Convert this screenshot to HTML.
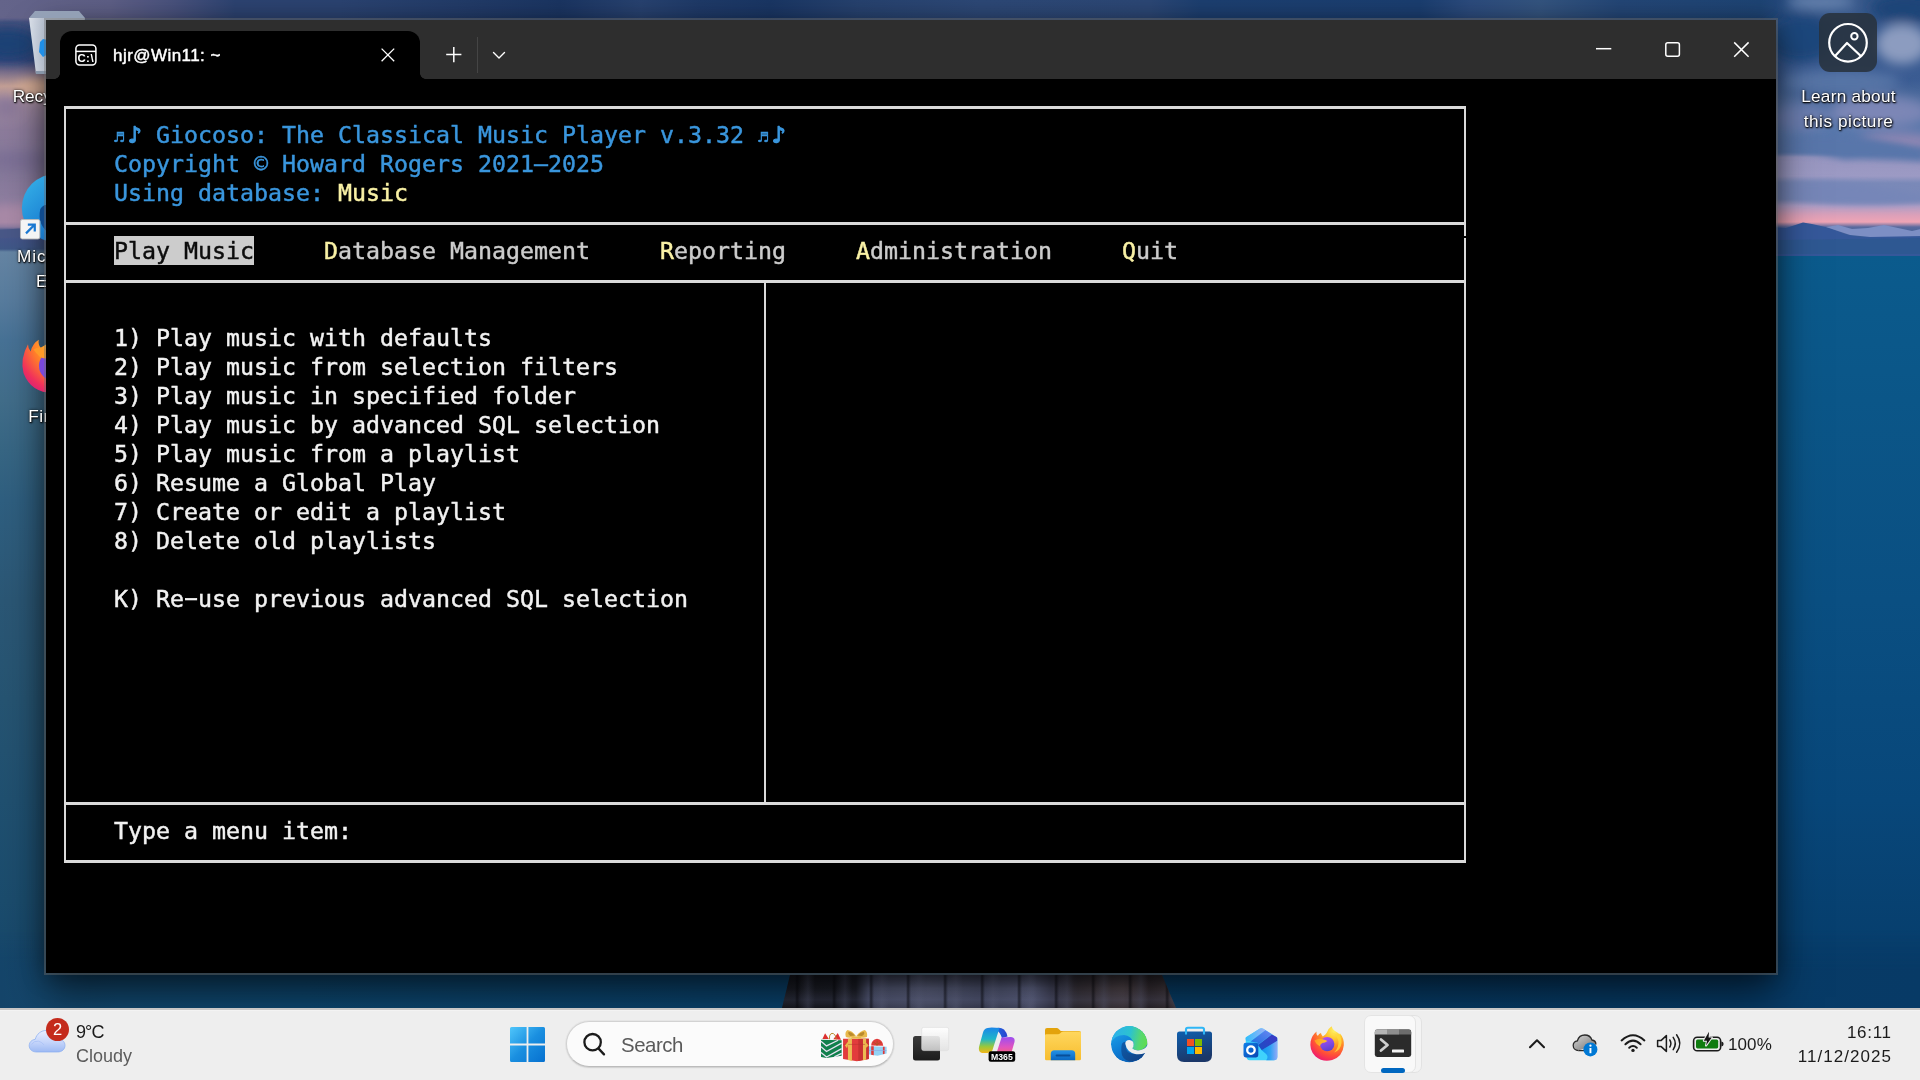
<!DOCTYPE html>
<html lang="en">
<head>
<meta charset="utf-8">
<title>hjr@Win11: ~</title>
<style>
*{box-sizing:border-box;margin:0;padding:0}
html,body{width:1920px;height:1080px;overflow:hidden;background:#0c3f63}
body{position:relative;font-family:"Liberation Sans","DejaVu Sans",sans-serif;color:#fff}
.abs{position:absolute}
svg{position:absolute;overflow:visible}
/* ---------- wallpaper ---------- */
#wp{position:absolute;left:0;top:0;width:1920px;height:1008px;overflow:hidden;background:#0d4a76}
#wpR{left:60px;top:0;width:1860px;height:1008px;background:linear-gradient(180deg,#27487e 0px,#34568c 30px,#3b5c93 80px,#4f6d9e 100px,#5777ab 130px,#5a78ac 152px,#9896c0 157px,#9c9ac4 176px,#7a89b8 183px,#7988b8 199px,#b09ec5 206px,#dba0b9 215px,#efa4b5 222px,#5a6a9e 227px,#3a5c94 236px,#2b598e 253px,#0b5b8d 255px,#0b5688 400px,#0a4f82 600px,#08477a 800px,#073f6e 940px,#073a66 1008px)}
#wpL{left:0;top:0;width:60px;height:1008px;background:linear-gradient(180deg,#636389 0px,#4a5480 18px,#2e4272 40px,#33457a 60px,#7a6f8c 72px,#c4a096 86px,#a08aa0 102px,#8d7c9c 130px,#85789a 170px,#8e7ea0 200px,#a98aa8 222px,#8a7aa0 227px,#4c5a8c 230px,#44568a 240px,#3f5888 249px,#6585a4 252px,#6283a2 264px,#587c9e 300px,#477296 340px,#416d8a 400px,#376684 450px,#2f5f80 500px,#2b5775 600px,#265472 700px,#205070 800px,#1b4c6d 900px,#15456a 1008px)}
#wpT{left:0;top:0;width:1920px;height:22px;background:linear-gradient(90deg,#64648a 0px,#5e5f86 110px,#48517c 175px,#2d4371 235px,#2b4371 340px,#223b68 470px,#1b3562 560px,#284270 640px,#1f3a68 700px,#1a3664 770px,#27426f 860px,#2d4876 980px,#2c4775 1150px,#1d3f70 1200px,#1b3e70 1420px,#2c4b7d 1470px,#34547f 1540px,#244676 1620px,#1e4474 1760px,#2a4c80 1800px,#3a5a8c 1850px,#22467a 1920px);-webkit-mask-image:linear-gradient(180deg,#000 0,#000 18px,transparent 22px);mask-image:linear-gradient(180deg,#000 0,#000 18px,transparent 22px)}
#wpB{left:0;top:930px;width:1920px;height:78px;background:linear-gradient(90deg,#15456a 0px,#124a72 120px,#0e4a74 300px,#0b4570 700px,#083f6a 1200px,#073c68 1600px,#073a66 1920px);-webkit-mask-image:linear-gradient(180deg,transparent 0,#000 40px);mask-image:linear-gradient(180deg,transparent 0,#000 40px)}
#pier{left:778px;top:975px;width:400px;height:33px;clip-path:polygon(12px 0,384px 0,398px 33px,4px 33px);background:repeating-linear-gradient(90deg,rgba(0,0,0,0) 0,rgba(0,0,0,0) 17px,rgba(8,8,14,.55) 19px,rgba(0,0,0,0) 22px,rgba(120,125,160,.25) 30px,rgba(0,0,0,0) 37px),linear-gradient(180deg,rgba(10,10,16,.35) 0,rgba(0,0,0,0) 40%,rgba(90,95,130,.25) 75%,rgba(10,10,16,.3) 100%),linear-gradient(90deg,#1c1e26 0,#20222c 78px,#565c7a 90px,#666c8c 150px,#545a78 200px,#6a7094 255px,#4c4e68 272px,#403a42 300px,#584c52 345px,#3a3238 372px,#4e444a 400px)}
/* ---------- terminal window ---------- */
#win{position:absolute;left:44px;top:18px;width:1734px;height:957px;border:2px solid rgba(111,111,111,.435);background:#000;background-clip:padding-box;will-change:transform}
#wsh{position:absolute;left:46px;top:20px;width:1730px;height:953px;box-shadow:0 24px 40px rgba(0,0,0,.52),0 2px 22px rgba(0,0,0,.4)}
#win .titlebar{position:absolute;left:0;top:0;width:1730px;height:59px;background:#2e2e2e}
#win .tab{position:absolute;left:14px;top:11px;width:360px;height:48px;background:#000;border-radius:12px 12px 0 0}
#win .tabcurve{position:absolute;left:374px;top:53px;width:6px;height:6px;background:radial-gradient(circle at 6px 0,#2e2e2e 5.6px,#000 6.2px)}
#win .tabcurveL{position:absolute;left:8px;top:53px;width:6px;height:6px;background:radial-gradient(circle at 0 0,#2e2e2e 5.6px,#000 6.2px)}
#win .tabtitle{position:absolute;left:67px;top:24px;font-size:17px;line-height:24px;color:#fff;font-weight:400;-webkit-text-stroke:0.45px #fff;white-space:nowrap;letter-spacing:0.45px}
#term{position:absolute;left:0;top:0;width:1920px;height:1080px;will-change:transform}
.ln{position:absolute;background:#dadada}
pre.t{position:absolute;font-family:"DejaVu Sans Mono","Liberation Mono",monospace;font-size:23.25px;line-height:29px;height:29px;white-space:pre;color:#f2f2f2;-webkit-text-stroke:.45px}
pre.cy{color:#3a96dd}
pre.gr{color:#cccccc}
.ye{color:#f9f1a5}
.hy{display:inline-block;width:14px;transform:translateY(-2px) scaleX(1.9);text-align:center}
.n1{display:inline-block;width:14px;font-size:16.5px;line-height:20px;text-align:left;letter-spacing:-2px;-webkit-text-stroke:.5px}
.n2{display:inline-block;width:14px;-webkit-text-stroke:1.3px}
.hl{background:#cccccc;color:#0c0c0c;display:inline-block;height:29px;vertical-align:top}
/* ---------- taskbar ---------- */
#tb{position:absolute;left:0;top:1008px;width:1920px;height:72px;background:#eeeeee;border-top:2px solid #c9c7c6;box-shadow:inset 0 1px 0 #f3f3f3}
#tbi{position:absolute;left:0;top:0;width:1920px;height:1080px;color:#1b1b1b;will-change:transform}
.tx{white-space:nowrap;line-height:24px}
.badge{left:45.900px;top:1017.800px;width:23.200px;height:23.200px;border-radius:12px;background:#c42b1c;color:#fff;font-size:16.500px;line-height:23.200px;text-align:center}
.search{left:566px;top:1021px;width:328px;height:46px;border-radius:23px;background:#fbfbfb;border:1px solid #d2d2d2;border-bottom-color:#bcbcbc;box-shadow:0 0 0 1px rgba(0,0,0,.035),0 1px 1.500px rgba(0,0,0,.1)}
#desk{position:absolute;left:0;top:0;width:1920px;height:1008px;overflow:hidden;will-change:transform}
.dl{position:absolute;left:-13px;width:140px;text-align:center;font-size:17.2px;line-height:25px;color:#fff;white-space:nowrap;text-shadow:1px 1px 2px rgba(0,0,0,.95),0 0 3px rgba(0,0,0,.8),0 1px 1px rgba(0,0,0,.7)}
</style>
</head>
<body>
<div id="wp">
  <div class="abs" id="wpR"></div>
  <div class="abs" id="wpL"></div>
  <div class="abs" id="wpT"></div>
  <div class="abs" id="wpB"></div>
  <svg style="left:1760px;top:0" width="160" height="270" viewBox="1760 0 160 270">
    <defs><filter id="b6" x="-30%" y="-30%" width="160%" height="160%"><feGaussianBlur stdDeviation="6"/></filter>
    <filter id="b3" x="-30%" y="-30%" width="160%" height="160%"><feGaussianBlur stdDeviation="3"/></filter>
    <filter id="b1" x="-10%" y="-10%" width="120%" height="120%"><feGaussianBlur stdDeviation=".7"/></filter></defs>
    <g filter="url(#b6)">
      <ellipse cx="1800" cy="38" rx="34" ry="24" fill="#1f477c"/>
      <ellipse cx="1905" cy="8" rx="34" ry="14" fill="#1e4478"/>
      <ellipse cx="1820" cy="2" rx="34" ry="8" fill="#6480ac"/>
      <ellipse cx="1902" cy="44" rx="26" ry="20" fill="#8c9cc0"/>
      <ellipse cx="1840" cy="82" rx="60" ry="12" fill="#5674a6"/>
      <ellipse cx="1880" cy="112" rx="50" ry="16" fill="#7c86b6"/>
      <ellipse cx="1800" cy="118" rx="30" ry="14" fill="#6c7eb0"/>
      <ellipse cx="1900" cy="142" rx="40" ry="8" fill="#9488b4"/>
    </g>
    <g filter="url(#b3)">
      <path d="M1770 140Q1850 128 1925 150L1925 162Q1860 158 1845 160Q1800 150 1770 154z" fill="#5876aa"/>
      <path d="M1770 184Q1840 176 1925 196L1925 202Q1850 208 1800 200L1770 196z" fill="#7686b8"/>
    </g>
    <g filter="url(#b1)">
      <path d="M1770 227L1786 228L1803 222.500L1812 224L1830 228L1845 234L1860 237L1880 234L1905 233L1925 229L1925 256L1770 256z" fill="#36599a"/>
      <path d="M1826 227L1838 225L1852 229L1868 228L1884 225L1898 228L1912 231L1925 228L1925 236L1870 237L1850 235z" fill="#7d8fc4"/>
      <path d="M1770 240L1925 238L1925 254L1770 254z" fill="#2d5890" opacity=".8"/>
    </g>
  </svg>
  <svg style="left:0;top:0" width="70" height="300" viewBox="0 0 70 300">
    <g filter="url(#b6)">
      <ellipse cx="8" cy="44" rx="30" ry="15" fill="#1d4276"/>
      <ellipse cx="36" cy="88" rx="20" ry="8" fill="#e2b69c"/>
      <ellipse cx="6" cy="108" rx="14" ry="10" fill="#8a789a"/>
      <ellipse cx="20" cy="160" rx="40" ry="8" fill="#7b7096"/>
      <ellipse cx="20" cy="214" rx="40" ry="7" fill="#ac8ba8"/>
    </g>
    <g filter="url(#b1)"><path d="M0 230L20 228.500L46 227L70 228L70 236L0 238z" fill="#4a5888"/></g>
  </svg>
  <div class="abs" id="pier"></div>
</div>
<div id="wsh"></div>
<div id="desk">
  <!-- recycle bin -->
  <svg style="left:28px;top:10px" width="58" height="70" viewBox="0 0 58 70">
    <defs><linearGradient id="rb1" x1="0" y1="0" x2="1" y2="0"><stop offset="0" stop-color="#e9eef4"/><stop offset=".25" stop-color="#c3ccd8"/><stop offset="1" stop-color="#aab6c6"/></linearGradient></defs>
    <path d="M1 8L7 1H51L57 8z" fill="#9aa9bc" opacity=".9"/>
    <path d="M1 8H57L50 64H8z" fill="url(#rb1)" opacity=".9"/><path d="M7.600 61H50.400L50 64H8z" fill="#8796a8"/>
    <path d="M12 32L15 29L20 30L18 36L20 44L15 47L11 42z" fill="#1f8fe8"/>
  </svg>
  <div class="dl" style="top:83.500px;left:-12px">Recycle Bin</div>
  <!-- edge shortcut -->
  <svg style="left:20px;top:172px" width="72" height="72" viewBox="0 0 78 78">
    <defs><linearGradient id="de1" x1="0" y1="0" x2="1" y2="1"><stop offset="0" stop-color="#39b6ea"/><stop offset=".5" stop-color="#1c84d4"/><stop offset="1" stop-color="#114a94"/></linearGradient></defs>
    <circle cx="39" cy="39" r="37" fill="url(#de1)"/>
    <path d="M22 40Q18 58 34 68Q50 76 66 64Q50 70 40 60Q30 50 34 38Q28 32 22 40z" fill="#0f4a8e"/>
    <rect x=".5" y="51.500" width="21" height="21" rx="2" fill="#f4f4f4" stroke="#b8b8b8" stroke-width="1"/>
    <path d="M6.500 66.500L15.500 57.500M8.500 57H16V64.500" fill="none" stroke="#1a78d2" stroke-width="2.400"/>
  </svg>
  <div class="dl" style="top:244px;left:-14px"><span style="letter-spacing:.9px">Microsoft</span><br>Edge</div>
  <!-- firefox -->
  <svg style="left:19px;top:327.800px" width="68.400" height="68.400" viewBox="0 0 38 38">
    <defs><radialGradient id="df1" cx=".75" cy=".15" r="1"><stop offset="0" stop-color="#fff04a"/><stop offset=".3" stop-color="#ffbd2f"/><stop offset=".6" stop-color="#ff7a2a"/><stop offset=".85" stop-color="#f0305c"/><stop offset="1" stop-color="#d61f7a"/></radialGradient></defs>
    <path d="M21 1Q23.500 5 27.500 7Q26.500 4.500 27.500 3Q36.500 10 36 21Q35 34 21 36Q7 37 2.500 25Q.5 17 5 9Q5 11.500 6.500 13Q7.500 8.500 11 6.500Q10.500 9 12 11Q17 9 21 1z" fill="url(#df1)"/>
    <circle cx="19.500" cy="21" r="8.400" fill="#7a48dc"/>
    <path d="M8 12Q12 9.500 16 12.500Q19 11 22 12.500Q18 13.500 17 16.500Q14 17.500 11.500 16Q9.500 14 8 12z" fill="#ff9a28"/>
  </svg>
  <div class="dl" style="top:404px;left:-14px;letter-spacing:.4px">Firefox</div>
  <!-- learn about this picture -->
  <div class="abs" style="left:1819px;top:13px;width:58px;height:59px;border-radius:11px;background:rgba(40,50,62,.88)"></div>
  <svg style="left:1826px;top:21px" width="44" height="44" viewBox="0 0 44 44" fill="none" stroke="#fff" stroke-width="2.200" stroke-linejoin="round">
    <circle cx="22" cy="21.800" r="18.800"/><circle cx="28.400" cy="15.300" r="3.200" stroke-width="2"/><path d="M8.400 35.800L21 22L35.600 35.800" stroke-linecap="butt"/>
  </svg>
  <div class="dl" style="left:1778px;width:141px;top:83.600px;line-height:25px;letter-spacing:.25px">Learn about<br><span style="letter-spacing:.55px">this picture</span></div>
</div>
<div id="win">
  <div class="titlebar">
    <div class="tab"></div>
    <div class="tabcurve"></div><div class="tabcurveL"></div>
    <svg style="left:29px;top:24px" width="22" height="22" viewBox="0 0 22 22" fill="none" stroke="#fff" stroke-width="1.5">
      <rect x="0.9" y="0.9" width="20" height="20" rx="3.6"/>
      <path d="M1 7.4H21"/>
      <text x="2.4" y="18" font-family="Liberation Sans, sans-serif" font-weight="700" font-size="11.4" fill="#fff" stroke="none" letter-spacing="0.5">C:\</text>
    </svg>
    <div class="tabtitle">hjr@Win11: ~</div>
    <svg style="left:335.200px;top:27.600px" width="14" height="14" viewBox="0 0 14 14" stroke="#fff" stroke-width="1.3" fill="none"><path d="M0.6 0.6L13.2 13.2M13.2 0.6L0.6 13.2"/></svg>
    <svg style="left:400px;top:27px" width="16" height="16" viewBox="0 0 16 16" stroke="#fff" stroke-width="1.5" fill="none"><path d="M0.2 7.6H15.4M7.8 0H7.8V15.2"/></svg>
    <div class="abs" style="left:431px;top:17px;width:1px;height:36px;background:#454545"></div>
    <svg style="left:446px;top:31px" width="14" height="8" viewBox="0 0 14 8" stroke="#fff" stroke-width="1.4" fill="none" stroke-linecap="round" stroke-linejoin="round"><path d="M1.500 1.500L7 7L12.500 1.500"/></svg>
    <svg style="left:1549px;top:21px" width="16" height="16" viewBox="0 0 16 16" stroke="#fff" stroke-width="1.5" fill="none"><path d="M1 7.7H16.3"/></svg>
    <svg style="left:1618px;top:21px" width="16" height="16" viewBox="0 0 16 16" stroke="#fff" stroke-width="1.5" fill="none"><rect x="1.8" y="1.7" width="13.6" height="13.6" rx="2"/></svg>
    <svg style="left:1687px;top:21px" width="16" height="16" viewBox="0 0 16 16" stroke="#fff" stroke-width="1.5" fill="none"><path d="M1.2 1.4L15.6 15.8M15.6 1.4L1.2 15.8"/></svg>
  </div>
</div>
<div id="term">
<div class="ln" style="left:64px;top:106px;width:1402px;height:3px"></div>
<div class="ln" style="left:64px;top:222px;width:1402px;height:3px"></div>
<div class="ln" style="left:64px;top:280px;width:1402px;height:3px"></div>
<div class="ln" style="left:64px;top:802px;width:1402px;height:3px"></div>
<div class="ln" style="left:64px;top:860px;width:1402px;height:3px"></div>
<div class="ln" style="left:64px;top:106px;width:2px;height:757px"></div>
<div class="ln" style="left:1464px;top:106px;width:2px;height:130px"></div>
<div class="ln" style="left:1464px;top:238px;width:2px;height:625px"></div>
<div class="ln" style="left:764px;top:280px;width:2px;height:525px"></div>
<pre class="t cy" style="left:114px;top:120px"><span class="n1">♬</span><span class="n2">♪</span> Giocoso: The Classical Music Player v.3.32 <span class="n1">♬</span><span class="n2">♪</span></pre>
<pre class="t cy" style="left:114px;top:149px">Copyright © Howard Rogers 2021–2025</pre>
<pre class="t cy" style="left:114px;top:178px">Using database: <span class="ye">Music</span></pre>
<pre class="t gr" style="left:114px;top:236px"><span class="hl">Play Music</span></pre>
<pre class="t gr" style="left:324px;top:236px"><span class="ye">D</span>atabase Management</pre>
<pre class="t gr" style="left:660px;top:236px"><span class="ye">R</span>eporting</pre>
<pre class="t gr" style="left:856px;top:236px"><span class="ye">A</span>dministration</pre>
<pre class="t gr" style="left:1122px;top:236px"><span class="ye">Q</span>uit</pre>
<pre class="t" style="left:114px;top:323px">1) Play music with defaults</pre>
<pre class="t" style="left:114px;top:352px">2) Play music from selection filters</pre>
<pre class="t" style="left:114px;top:381px">3) Play music in specified folder</pre>
<pre class="t" style="left:114px;top:410px">4) Play music by advanced SQL selection</pre>
<pre class="t" style="left:114px;top:439px">5) Play music from a playlist</pre>
<pre class="t" style="left:114px;top:468px">6) Resume a Global Play</pre>
<pre class="t" style="left:114px;top:497px">7) Create or edit a playlist</pre>
<pre class="t" style="left:114px;top:526px">8) Delete old playlists</pre>
<pre class="t" style="left:114px;top:584px">K) Re<span class="hy">-</span>use previous advanced SQL selection</pre>
<pre class="t" style="left:114px;top:816px">Type a menu item:</pre>
</div>
<div id="tb"></div>
<div id="tbi">
  <!-- weather widget -->
  <svg style="left:28px;top:1026px" width="40" height="28" viewBox="0 0 40 28">
    <defs><linearGradient id="cl" x1="0" y1="0" x2="0" y2="1"><stop offset="0" stop-color="#eaf0ff"/><stop offset=".55" stop-color="#c4d4fa"/><stop offset="1" stop-color="#9db9f3"/></linearGradient></defs>
    <path d="M8.5 26C4 26 1.2 23.2 1.2 19.6c0-3.4 2.6-6 6-6.2C8.6 8 13 4.4 18.6 4.4c5.4 0 9.6 3.2 11 8 4.2.4 7.4 3.4 7.4 7 0 3.8-3 6.6-7.4 6.6z" fill="url(#cl)" stroke="#86acf0" stroke-width=".7"/>
    <path d="M3.500 18.500Q6 14.500 10.500 15.200Q14 16 16 19" fill="none" stroke="#a9c2f6" stroke-width=".8"/>
  </svg>
  <div class="abs badge">2</div>
  <div class="abs tx" style="left:76px;top:1020px;font-size:18px;letter-spacing:-.9px;color:#1a1a1a">9°C</div>
  <div class="abs tx" style="left:76px;top:1044px;font-size:18px;color:#5c5c5c">Cloudy</div>
  <!-- start -->
  <svg style="left:510px;top:1027px" width="35" height="35" viewBox="0 0 35 35">
    <defs><linearGradient id="wl" x1="0" y1="0" x2="1" y2="1"><stop offset="0" stop-color="#4fc6fb"/><stop offset=".5" stop-color="#1a8fe0"/><stop offset="1" stop-color="#0670cf"/></linearGradient></defs>
    <path d="M1.5 0H16.6V16.6H0V1.5Q0 0 1.5 0zM18.4 0H33.5Q35 0 35 1.5V16.6H18.4zM0 18.4H16.6V35H1.5Q0 35 0 33.5zM18.4 18.4H35V33.5Q35 35 33.5 35H18.4z" fill="url(#wl)"/>
  </svg>
  <!-- search -->
  <div class="abs search"></div>
  <svg style="left:582px;top:1031px" width="24" height="26" viewBox="0 0 24 26" fill="none" stroke="#1b1b1b" stroke-width="2.3" stroke-linecap="round"><circle cx="10.6" cy="11.2" r="8.2"/><path d="M16.6 17.6L22 23.4"/></svg>
  <div class="abs tx" style="left:621px;top:1032.500px;font-size:20.400px;letter-spacing:-.45px;color:#5a5a5a;line-height:24px">Search</div>
  <!-- gifts -->
  <svg style="left:820px;top:1030px" width="70" height="34" viewBox="0 0 70 34">
    <path d="M 2.42 8.98 L 5.09 3.27 L 8.84 8.98 z M 13.34 9.31 L 17.75 3.03 L 21.03 9.78 z" fill="#dc3030"/>
    <path d="M 9.59 9.22 Q 8.98 4.06 12.03 3.36 Q 15.55 3.36 16.25 9.45" fill="none" stroke="#b98a2c" stroke-width="1"/>
    <path d="M 1.02 9.69 L 21.64 10.25 L 21.64 25.63 L 6.50 28.06 L 1.02 27.03 z" fill="#10804c"/>
    <path d="M 1.02 11.19 L 6.50 15.88 L 18.13 10.25 M 1.02 16.81 L 6.50 21.50 L 21.64 13.06 M 1.02 22.44 L 6.50 27.03 L 21.64 18.69 M 14.38 26.80 L 21.64 23.38" fill="none" stroke="#e6e2f2" stroke-width="1.300"/>
    <path d="M 23.05 8.75 L 48.83 8.75 L 48.83 29.00 L 36.88 31.34 L 23.05 29.00 z" fill="#e23c3c"/>
    <path d="M 38.28 8.75 L 48.83 8.75 L 48.83 29.00 L 38.28 31.06 z" fill="#c93232"/>
    <path d="M 27.97 8.75 L 31.95 8.75 L 31.95 30.69 L 27.97 29.94 z M 42.97 8.75 L 46.11 8.75 L 46.11 29.66 L 42.97 30.22 z" fill="#ecbc52"/>
    <path d="M 23.05 14.38 L 48.83 14.38" stroke="#b63030" stroke-width=".5"/>
    <path d="M 36.17 6.17 Q 32.19 0.78 27.50 0.08 Q 24.45 2.19 25.86 6.88 Q 29.84 8.75 36.17 6.17 z M 36.17 6.17 Q 40.16 0.78 44.84 -0.06 Q 47.89 2.19 46.95 6.88 Q 42.50 8.75 36.17 6.17 z" fill="#e9b94c"/>
    <path d="M 35.00 5.47 Q 31.72 1.95 28.53 1.72 Q 27.50 4.06 30.31 5.94 z M 37.44 5.47 Q 40.63 1.95 43.91 1.72 Q 45.31 4.06 42.03 5.94 z" fill="#b98a2c"/>
    <path d="M 32.19 6.41 L 40.63 6.41 L 48.59 15.55 L 46.25 17.66 L 42.97 8.75 L 29.84 8.75 L 27.03 18.13 L 24.92 15.55 z" fill="#e9b94c"/>
    <path d="M 49.06 16.25 L 66.64 16.72 L 66.64 23.38 L 57.50 25.72 L 49.06 24.59 z" fill="#93d2f5"/>
    <path d="M 51.17 16.25 L 53.75 16.25 L 53.75 25.16 L 51.17 24.78 z M 62.89 16.63 L 64.63 16.63 L 64.63 23.84 L 62.89 24.31 z" fill="#e03a3a"/>
    <path d="M 49.06 20.47 L 66.64 20.47" stroke="#8aa6e0" stroke-width=".6"/>
    <path d="M 51.17 15.55 Q 51.41 9.69 57.03 8.75 Q 62.66 9.69 63.22 15.69 z" fill="#e03a3a"/>
    <path d="M 57.03 15.31 Q 54.69 12.03 53.28 12.50 M 57.03 15.31 Q 59.38 12.03 61.25 12.50 M 57.03 15.31 L 57.13 10.63" fill="none" stroke="#a8541e" stroke-width=".8"/>
  </svg>
  <!-- task view -->
  <svg style="left:912px;top:1026px" width="38" height="36" viewBox="0 0 38 36">
    <defs><linearGradient id="tv1" x1="0" y1="0" x2="0" y2="1"><stop offset="0" stop-color="#3a3a3a"/><stop offset="1" stop-color="#1c1c1c"/></linearGradient>
    <linearGradient id="tv2" x1="0" y1="0" x2="0" y2="1"><stop offset="0" stop-color="#ffffff" stop-opacity=".95"/><stop offset="1" stop-color="#e2e2e2" stop-opacity=".82"/></linearGradient></defs>
    <rect x="1" y="10" width="27" height="24.600" rx="2.500" fill="url(#tv1)"/>
    <rect x="9.700" y="1.400" width="27" height="23.200" rx="2" fill="url(#tv2)" stroke="#dcdcdc" stroke-width=".6"/>
  </svg>
  <!-- M365 copilot -->
  <svg style="left:978px;top:1027px" width="38" height="36" viewBox="0 0 38 36">
    <defs><linearGradient id="cp1" x1="0" y1="0" x2="0" y2="1"><stop offset="0" stop-color="#1a86e8"/><stop offset=".45" stop-color="#1fb6c9"/><stop offset=".75" stop-color="#9bc83a"/><stop offset="1" stop-color="#f2b418"/></linearGradient>
    <linearGradient id="cp2" x1="0" y1="0" x2="0" y2="1"><stop offset="0" stop-color="#9b4df0"/><stop offset=".5" stop-color="#e054c0"/><stop offset="1" stop-color="#ff6a5c"/></linearGradient>
    <linearGradient id="cp3" x1="0" y1="0" x2="1" y2="0"><stop offset="0" stop-color="#1d6fe0"/><stop offset="1" stop-color="#2a3fcf"/></linearGradient></defs>
    <path d="M17 1.500Q22 -.5 26 2.500Q28.500 5 29.500 9.500L24 11Q22 5 17 1.500z" fill="url(#cp3)"/>
    <path d="M9.500 1Q12 .2 21.500 1L14.500 23Q13.500 26 9 26L4 26Q0 25 1 20L5 5.500Q6 1.800 9.500 1z" fill="url(#cp1)"/>
    <path d="M23.500 10.500L33 10Q37.500 10.500 36.500 15L33 27Q32 30 28 30L14 30Q17.500 29 19 24.500z" fill="url(#cp2)"/>
    <rect x="10.600" y="24.200" width="26.600" height="10.600" rx="2.200" fill="#000"/>
    <text x="23.900" y="32.600" text-anchor="middle" font-family="Liberation Sans, sans-serif" font-weight="700" font-size="8.700" fill="#fff">M365</text>
  </svg>
  <!-- file explorer -->
  <svg style="left:1044px;top:1027px" width="38" height="34" viewBox="0 0 38 34">
    <defs><linearGradient id="fe1" x1="0" y1="0" x2="0" y2="1"><stop offset="0" stop-color="#ffd75e"/><stop offset="1" stop-color="#f7bd2f"/></linearGradient>
    <linearGradient id="fe2" x1="0" y1="0" x2="0" y2="1"><stop offset="0" stop-color="#2492e6"/><stop offset="1" stop-color="#0a67c2"/></linearGradient></defs>
    <path d="M1 3Q1 1 3 1L12.500 1Q14 1 15 2.200L16.800 4L35 4Q37 4 37 6V12H1z" fill="#e3a30c"/>
    <path d="M1 8.500Q1 7.200 2.400 7.200L14 7.200Q15.200 7.200 16.200 6.300L17.600 5Q18.400 4.400 19.600 4.400L35.600 4.400Q37 4.400 37 5.800L37 32Q37 33.300 35.600 33.300L2.400 33.300Q1 33.300 1 32z" fill="url(#fe1)"/>
    <path d="M6.800 33.300V26.800Q6.800 23.200 10.400 23.200L27.600 23.200Q31.200 23.200 31.200 26.800V33.300z" fill="url(#fe2)"/>
    <rect x="11.600" y="27.400" width="14.800" height="2" rx="1" fill="#084f99"/>
  </svg>
  <!-- edge -->
  <svg style="left:1110.600px;top:1025.700px" width="36.500" height="36.500" viewBox="0 0 36.500 36.500">
    <defs><linearGradient id="ed1" x1=".1" y1=".1" x2=".6" y2="1"><stop offset="0" stop-color="#1fa3e8"/><stop offset=".5" stop-color="#0f7fd6"/><stop offset="1" stop-color="#0b5fb4"/></linearGradient>
    <linearGradient id="ed2" x1="0" y1=".4" x2="1" y2=".55"><stop offset="0" stop-color="#2db0ec"/><stop offset=".5" stop-color="#2cc2cf"/><stop offset=".8" stop-color="#56d870"/><stop offset="1" stop-color="#5fdc50"/></linearGradient>
    <linearGradient id="ed3" x1="0" y1="0" x2="1" y2="1"><stop offset="0" stop-color="#0e5cab"/><stop offset="1" stop-color="#123f80"/></linearGradient>
    <clipPath id="edc"><circle cx="18.250" cy="18.250" r="18.250"/></clipPath></defs>
    <g clip-path="url(#edc)">
    <circle cx="18.250" cy="18.250" r="18.250" fill="url(#ed1)"/>
    <path d="M 10.94 17.81 Q 13.12 15.00 15.31 16.25 Q 13.44 22.81 17.50 26.56 Q 23.12 29.56 33.88 27.06 Q 29.38 35.44 19.38 35.75 Q 10.62 34.06 10.31 25.31 Q 10.00 20.94 10.94 17.81 z" fill="url(#ed3)"/>
    <path d="M 0.12 16.88 Q 3.44 9.06 13.12 8.94 Q 20.00 9.38 22.50 16.56 Q 22.94 20.31 21.25 22.31 Q 23.12 24.56 27.50 24.38 Q 34.38 23.75 36.56 17.19 A 18.25 18.25 0 0 0 0.12 16.88 z" fill="url(#ed2)"/>
    </g>
    <path d="M 14.25 17.81 Q 14.38 14.06 18.25 14.06 Q 22.62 14.38 22.62 18.44 Q 22.62 20.94 21.25 22.31 Q 22.81 24.50 27.19 24.38 Q 33.12 24.06 36.38 19.38 L 37.81 19.38 L 37.81 28.44 L 34.06 27.06 Q 29.38 28.94 24.06 28.00 Q 15.94 26.25 14.25 17.81 z" fill="#eeeeee"/>
  </svg>
  <!-- store -->
  <svg style="left:1176px;top:1026px" width="38" height="38" viewBox="0 0 38 38">
    <defs><linearGradient id="st1" x1="0" y1="0" x2=".3" y2="1"><stop offset="0" stop-color="#0f5fae"/><stop offset="1" stop-color="#1b3768"/></linearGradient></defs>
    <path d="M1 8Q1 5.500 3.500 5.500L33.500 5.500Q36 5.500 36 8L36 29Q36 36 29 36L8 36Q1 36 1 29z" fill="url(#st1)"/>
    <path d="M10 8.400V3.600Q10 1.800 11.800 1.800L26.200 1.800Q28 1.800 28 3.600V8.400" fill="none" stroke="#2fb6f6" stroke-width="2.100"/>
    <rect x="11" y="13" width="7" height="7" fill="#f25022"/><rect x="19" y="13" width="7" height="7" fill="#7fba00"/>
    <rect x="11" y="21" width="7" height="7" fill="#00a4ef"/><rect x="19" y="21" width="7" height="7" fill="#ffb900"/>
  </svg>
  <!-- outlook -->
  <svg style="left:1242.625px;top:1027.562px" width="35" height="33" viewBox="0 0 35 33">
    <defs><linearGradient id="ol1" x1="0" y1="0" x2="1" y2="0"><stop offset="0" stop-color="#2fbdfb"/><stop offset="1" stop-color="#9fb2f8"/></linearGradient>
    <linearGradient id="ol2" x1="0" y1="1" x2="1" y2="0"><stop offset="0" stop-color="#1a6fe0"/><stop offset="1" stop-color="#6a86f2"/></linearGradient>
    <linearGradient id="ol3" x1="0" y1="1" x2="1" y2="0"><stop offset="0" stop-color="#1a4fc4"/><stop offset="1" stop-color="#3f38c6"/></linearGradient>
    <linearGradient id="ol4" x1="0" y1="0" x2="1" y2="0"><stop offset="0" stop-color="#0a94f0"/><stop offset=".55" stop-color="#2ea2f4"/><stop offset="1" stop-color="#93aaf8"/></linearGradient>
    <linearGradient id="ol5" x1="0" y1="0" x2="1" y2="1"><stop offset="0" stop-color="#0f80ea"/><stop offset="1" stop-color="#0a44b0"/></linearGradient></defs>
    <path d="M 2.62 10.31 Q 2.62 9.38 3.44 8.88 L 16.56 0.81 Q 18.44 -0.19 20.31 0.81 L 33.44 8.88 Q 34.38 9.50 34.38 10.62 L 34.38 29.06 Q 34.12 32.19 30.88 32.31 L 6.56 32.31 Q 3.75 32.06 3.44 29.06 z" fill="#3fd2fc"/>
    <path d="M 18.75 22.19 L 34.38 12.50 L 34.38 29.06 Q 34.12 32.19 30.88 32.31 L 23.12 32.31 Q 25.94 28.75 23.12 25.94 z" fill="url(#ol4)"/>
    <path d="M 2.62 10.31 Q 2.62 9.38 3.44 8.88 L 16.56 0.81 Q 18.44 -0.19 20.31 0.81 L 22.50 2.19 L 7.50 13.12 L 3.44 13.12 Q 2.62 12.19 2.62 10.31 z" fill="url(#ol1)"/>
    <path d="M 7.50 13.44 L 22.50 2.31 L 28.88 6.25 L 14.69 16.88 L 14.69 14.69 z" fill="url(#ol2)"/>
    <path d="M 15.00 17.06 L 28.88 6.38 L 33.44 9.06 Q 34.50 9.69 34.25 11.25 L 34.25 12.69 L 18.75 22.31 z" fill="url(#ol3)"/>
    <rect x="0.50" y="14.69" width="14.81" height="14.69" rx="2.300" fill="url(#ol5)"/>
    <circle cx="7.94" cy="22.06" r="3.750" fill="none" stroke="#fff" stroke-width="2.300"/>
  </svg>
  <!-- firefox -->
  <svg style="left:1309.812px;top:1025.688px" width="35" height="36" viewBox="0 0 35 36">
    <defs><radialGradient id="ff1" cx=".72" cy=".12" r="1.050"><stop offset="0" stop-color="#fff36a"/><stop offset=".22" stop-color="#ffcc30"/><stop offset=".45" stop-color="#ff8a25"/><stop offset=".7" stop-color="#ff4a3a"/><stop offset=".88" stop-color="#f0206a"/><stop offset="1" stop-color="#d01a8a"/></radialGradient>
    <linearGradient id="ff2" x1=".3" y1="0" x2=".6" y2="1"><stop offset="0" stop-color="#b24df2"/><stop offset=".6" stop-color="#7a48e0"/><stop offset="1" stop-color="#5a40cc"/></linearGradient>
    <linearGradient id="ff3" x1="0" y1="0" x2="1" y2=".3"><stop offset="0" stop-color="#ff9820"/><stop offset="1" stop-color="#ffc02c"/></linearGradient></defs>
    <path d="M 6.56 5.62 Q 5.94 9.06 7.94 9.81 Q 8.94 7.69 10.94 7.06 Q 11.25 9.06 12.81 10.44 Q 15.94 8.56 16.88 6.56 Q 17.81 2.81 21.56 0.31 Q 22.19 3.12 24.69 4.81 Q 28.44 7.06 29.56 8.56 L 29.81 7.31 Q 34.19 12.19 33.81 19.19 Q 32.81 30.31 22.19 34.06 Q 12.81 36.69 5.31 30.31 Q -0.94 24.06 0.62 15.31 Q 2.19 9.06 6.56 5.62 z" fill="url(#ff1)"/>
    <circle cx="17.19" cy="18.12" r="7.200" fill="url(#ff2)"/>
    <path d="M 4.38 14.56 Q 8.75 12.06 12.69 13.19 Q 15.44 13.81 17.44 15.06 Q 14.94 16.81 12.31 17.06 Q 10.44 18.12 9.81 20.19 Q 6.25 18.75 4.38 14.56 z" fill="url(#ff3)"/>
    <path d="M 20.94 6.25 Q 27.19 9.06 28.44 15.31 Q 29.06 21.56 24.06 26.56 Q 30.94 24.06 31.56 16.56 Q 31.25 10.31 28.44 7.50 Q 27.81 9.06 28.44 10.31 Q 25.31 7.19 20.94 6.25 z" fill="#ffdc3c" opacity=".8"/>
  </svg>
  <!-- terminal (active) -->
  <div class="abs" style="left:1370px;top:1015px;width:52px;height:58px;border-radius:7px;background:#f4f4f4;border:1px solid #e2e2e2"></div>
  <div class="abs" style="left:1364px;top:1015px;width:52px;height:58px;border-radius:7px;background:#f9f9f9;border:1px solid #e4e4e4"></div>
  <svg style="left:1374px;top:1029px" width="38" height="29" viewBox="0 0 38 29">
    <rect x=".8" y=".6" width="36.400" height="27.400" rx="2.400" fill="#2b2b2b"/>
    <path d="M.8 5.600V3Q.8 .6 3.200 .6H13V5.600z" fill="#b4b4b4"/><rect x="13" y=".6" width="12" height="5" fill="#8e8e8e"/><path d="M25 .6H34.800Q37.200 .6 37.200 3V5.600H25z" fill="#6c6c6c"/>
    <path d="M7 10.500L13.500 16L7 21.500" fill="none" stroke="#cfcfcf" stroke-width="2.800" stroke-linecap="round" stroke-linejoin="round"/>
    <rect x="18" y="20.400" width="12" height="3.200" rx=".6" fill="#f2f2f2"/>
  </svg>
  <div class="abs" style="left:1381px;top:1068px;width:24px;height:5px;border-radius:2.500px;background:#0067c0"></div>
  <!-- tray -->
  <svg style="left:1528px;top:1038px" width="18" height="11" viewBox="0 0 18 11" fill="none" stroke="#1b1b1b" stroke-width="2" stroke-linecap="round" stroke-linejoin="round"><path d="M2 9.200L9 2.200L16 9.200"/></svg>
  <svg style="left:1572px;top:1033px" width="27" height="24" viewBox="0 0 27 24">
    <defs><linearGradient id="od" x1="0" y1="0" x2="1" y2="1"><stop offset="0" stop-color="#d8d8d8"/><stop offset="1" stop-color="#6e6e6e"/></linearGradient></defs>
    <path d="M6.500 17.600C3.400 17.600 1.200 15.400 1.200 12.600c0-2.500 1.800-4.500 4.200-4.800C6.400 4.300 9.300 2 12.800 2c3.300 0 6.100 2 7.100 5 2.300.3 4 2.200 4 4.500" fill="url(#od)" stroke="#2a2a2a" stroke-width="1.300"/>
    <path d="M6.500 17.600H14" stroke="#2a2a2a" stroke-width="1.300"/>
    <circle cx="18.400" cy="16.400" r="7" fill="#0078d4"/>
    <rect x="17.500" y="15" width="1.900" height="5.200" fill="#fff"/><circle cx="18.450" cy="12.700" r="1.150" fill="#fff"/>
  </svg>
  <svg style="left:1620px;top:1033px" width="26" height="20" viewBox="0 0 26 20" fill="none" stroke="#1b1b1b" stroke-width="2" stroke-linecap="round">
    <path d="M1.600 7.400Q13 -3 24.400 7.400"/><path d="M5.400 11.200Q13 4 20.600 11.200"/><path d="M9.200 14.800Q13 11.200 16.800 14.800"/><circle cx="13" cy="17.400" r="1.700" fill="#1b1b1b" stroke="none"/>
  </svg>
  <svg style="left:1656px;top:1033px" width="27" height="21" viewBox="0 0 27 21" fill="none" stroke="#1b1b1b" stroke-width="1.500" stroke-linecap="round" stroke-linejoin="round">
    <path d="M1.600 7.400H5.200L10.400 2.600V18.400L5.200 13.600H1.600z"/><path d="M13.800 7Q16 10.500 13.800 14"/><path d="M17.200 4.400Q21.400 10.500 17.200 16.600"/><path d="M20.600 1.800Q27 10.500 20.600 19.200"/>
  </svg>
  <svg style="left:1692px;top:1031px" width="33" height="22" viewBox="0 0 33 22">
    <rect x="1.600" y="6.200" width="27" height="13.600" rx="3.600" fill="none" stroke="#1b1b1b" stroke-width="1.600"/>
    <path d="M29.400 10.400Q31.600 10.600 31.600 13Q31.600 15.400 29.400 15.600z" fill="#1b1b1b"/>
    <rect x="4" y="8.600" width="22.200" height="8.800" rx="1.600" fill="#107c10"/>
    <path d="M17 .8L11.800 9.800H15L14 14.600L19.800 6.400H16.600z" fill="#141414" stroke="#eeeeee" stroke-width="2" stroke-linejoin="round" paint-order="stroke"/>
  </svg>
  <div class="abs tx" style="left:1728px;top:1033px;font-size:17px;letter-spacing:.1px">100%</div>
  <div class="abs tx" style="right:29px;top:1021px;font-size:17px;letter-spacing:.7px;margin-right:-.7px">16:11</div>
  <div class="abs tx" style="right:29px;top:1045px;font-size:17px;letter-spacing:1.050px;margin-right:-1.050px">11/12/2025</div>
</div>
</body>
</html>
